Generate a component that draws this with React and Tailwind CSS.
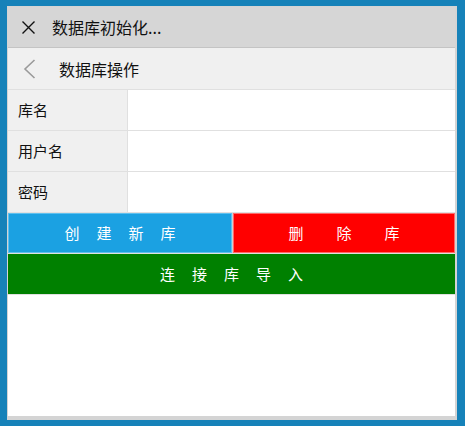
const font = { fontFamily: '"Noto Sans CJK SC", "Noto Sans", sans-serif' }

function Spaced({ text, gap }) {
  return (
    <span className={`flex items-center ${gap}`}>
      {text.split('').map((c, i) => (
        <span key={i}>{c}</span>
      ))}
    </span>
  )
}

function Row({ label }) {
  return (
    <div className="flex h-[41px] border-b border-[#e0e0e0]">
      <div className="w-[120px] bg-[#f0f0f0] border-r border-[#e0e0e0] flex items-center pl-[10px] text-[15px] text-[#111]">
        {label}
      </div>
      <div className="flex-1 bg-white" />
    </div>
  )
}

export default function App() {
  return (
    <div
      className="w-[465px] h-[426px] bg-[#1682b9] pt-[6px] pl-[7px] pr-[8px] pb-[6px]"
      style={font}
    >
      <div className="h-full flex flex-col bg-white border-l border-t border-r-2 border-b-4 border-[#d4d4d4]">
        <header className="h-[41px] bg-[#d6d6d6] border-b border-[#c4c4c4] flex items-center">
          <svg className="ml-[13px]" width="15" height="13" viewBox="0 0 15 13">
            <path d="M1.5 0.5 L13.5 12.5 M13.5 0.5 L1.5 12.5" stroke="#111" strokeWidth="1.4" fill="none" />
          </svg>
          <span className="ml-[16px] text-[16px] text-[#111]">数据库初始化...</span>
        </header>

        <nav className="h-[42px] bg-[#f0f0f0] border-b border-[#e0e0e0] flex items-center">
          <svg className="ml-[15px]" width="13" height="20" viewBox="0 0 13 20">
            <path d="M11.5 1 L2 10 L11.5 19" stroke="#9a9a9a" strokeWidth="1.6" fill="none" />
          </svg>
          <span className="ml-[23px] text-[16px] text-[#111]">数据库操作</span>
        </nav>

        <Row label="库名" />
        <Row label="用户名" />
        <Row label="密码" />

        <div className="flex h-[41px] text-white text-[15px] border-b border-[#e0e0e0]">
          <button type="button" className="w-[224px] bg-[#1ba1e2] border border-[#5ec0ef] flex items-center justify-center">
            <Spaced text="创建新库" gap="gap-[17px]" />
          </button>
          <div className="w-px bg-[#d0d0d0]" />
          <button type="button" className="flex-1 bg-[#ff0000] border border-[#ff6a6a] flex items-center justify-center">
            <Spaced text="删除库" gap="gap-[33px]" />
          </button>
        </div>

        <button type="button" className="h-[41px] bg-[#008000] text-white text-[15px] flex items-center justify-center border-b border-[#e0e0e0]">
          <Spaced text="连接库导入" gap="gap-[17px]" />
        </button>

        <div className="flex-1 bg-white" />
      </div>
    </div>
  )
}
